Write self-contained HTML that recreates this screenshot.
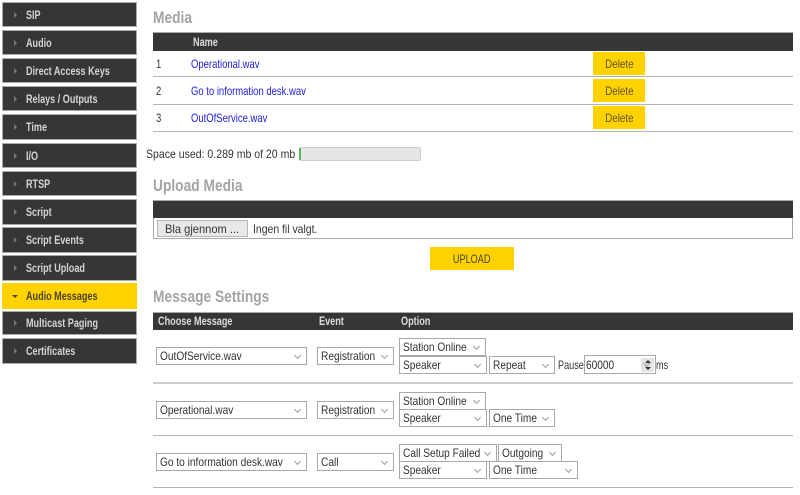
<!DOCTYPE html>
<html><head><meta charset="utf-8"><style>
html,body{margin:0;padding:0;width:800px;height:495px;overflow:hidden;background:#fff}
body{position:relative;font-family:"Liberation Sans",sans-serif;font-size:12px;color:#333;filter:blur(.3px)}
div{position:absolute;box-sizing:border-box}
span{position:absolute;white-space:nowrap;transform-origin:0 50%;transform:scaleX(.79);line-height:14px}
.n{left:2px;width:135px;background:#363636;border:1px solid #aaa}
.n span{left:23px;top:50%;margin-top:-7px;font-weight:bold;font-size:12px;color:#d4d4d4;transform:scaleX(.755)}
.n i{position:absolute;left:11px;top:50%;margin-top:-3px;border-left:3px solid #777;border-top:3px solid transparent;border-bottom:3px solid transparent}
.h{left:153px;font-size:17px;font-weight:bold;color:#a4a4a4;white-space:nowrap;transform-origin:0 50%;transform:scaleX(.81);line-height:18px}
.b{left:153px;width:640px;background:#363636;border-top:1px solid #aaa}
.b span{color:#ddd;font-weight:bold;font-size:12px;top:1px;transform:scaleX(.76)}
.l{left:153px;width:640px;height:1px;background:#b4b4b4}
.a{color:#2020e0}
.d{left:593px;width:52px;background:#ffd200;text-align:center;color:#5f5420;line-height:25px}
.d span{position:static;display:inline-block;transform-origin:50% 50%;transform:scaleX(.82);line-height:inherit}
.s{height:18px;background:#fff;border:1px solid #a8a8a8;color:#333}
.s span{left:3px;top:1px;font-size:12px;transform:scaleX(.845)}
.s:after{content:"";position:absolute;right:6px;top:5px;width:4px;height:4px;border-right:1px solid #999;border-bottom:1px solid #999;transform:rotate(45deg)}
</style></head><body>
<div class="n" style="top:2px;height:25px"><i></i><span>SIP</span></div>
<div class="n" style="top:30px;height:25px"><i></i><span>Audio</span></div>
<div class="n" style="top:58px;height:25px"><i></i><span>Direct Access Keys</span></div>
<div class="n" style="top:86px;height:25px"><i></i><span>Relays / Outputs</span></div>
<div class="n" style="top:114px;height:26px"><i></i><span>Time</span></div>
<div class="n" style="top:143px;height:25px"><i></i><span>I/O</span></div>
<div class="n" style="top:171px;height:25px"><i></i><span>RTSP</span></div>
<div class="n" style="top:199px;height:26px"><i></i><span>Script</span></div>
<div class="n" style="top:227px;height:26px"><i></i><span>Script Events</span></div>
<div class="n" style="top:255px;height:26px"><i></i><span>Script Upload</span></div>
<div class="n" style="top:283px;height:26px;background:#ffd200;border-color:#ffd200"><i style="left:9px;margin-top:-1px;border-left:3px solid transparent;border-right:3px solid transparent;border-top:3px solid #444;border-bottom:0"></i><span style="color:#4a4320">Audio Messages</span></div>
<div class="n" style="top:311px;height:24px"><i></i><span>Multicast Paging</span></div>
<div class="n" style="top:338px;height:26px"><i></i><span>Certificates</span></div>

<div class="h" style="top:9px">Media</div>
<div class="b" style="top:32px;height:19px"><span style="left:40px;top:2px">Name</span></div>
<span style="left:156px;top:57px">1</span><span class="a" style="left:191px;top:57px">Operational.wav</span>
<div class="l" style="top:76px"></div>
<span style="left:156px;top:84px">2</span><span class="a" style="left:191px;top:84px">Go to information desk.wav</span>
<div class="l" style="top:104px"></div>
<span style="left:156px;top:111px">3</span><span class="a" style="left:191px;top:111px">OutOfService.wav</span>
<div class="l" style="top:131px"></div>
<div class="d" style="top:52px;height:23px"><span>Delete</span></div>
<div class="d" style="top:79px;height:23px"><span>Delete</span></div>
<div class="d" style="top:106px;height:23px"><span>Delete</span></div>

<span style="left:146px;top:147px;transform:scaleX(.877)">Space used: 0.289 mb of 20 mb</span>
<div style="left:299px;top:147px;width:122px;height:14px;background:#e6e6e6;border:1px solid #ccc;border-radius:2px"></div>
<div style="left:299px;top:148px;width:2px;height:12px;background:#5cb85c"></div>

<div class="h" style="top:177px">Upload Media</div>
<div class="b" style="top:200px;height:18px"></div>
<div style="left:153px;top:218px;width:640px;height:21px;border:1px solid #aaa;border-top:0"></div>
<div style="left:157px;top:220px;width:91px;height:17px;background:#e8e8e8;border:1px solid #b8b8b8"><span style="left:7px;top:1px;transform:scaleX(.926)">Bla gjennom ...</span></div>
<span style="left:253px;top:222px;transform:scaleX(.87)">Ingen fil valgt.</span>
<div class="d" style="left:430px;top:247px;width:84px;height:23px;color:#4a4320"><span style="transform:scaleX(.76)">UPLOAD</span></div>

<div class="h" style="top:288px">Message Settings</div>
<div class="b" style="top:312px;height:18px"><span style="left:5px">Choose Message</span><span style="left:166px">Event</span><span style="left:248px">Option</span></div>

<div class="s" style="left:156px;top:347px;width:151px"><span>OutOfService.wav</span></div>
<div class="s" style="left:317px;top:347px;width:77px"><span>Registration</span></div>
<div class="s" style="left:399px;top:338px;width:87px"><span>Station Online</span></div>
<div class="s" style="left:399px;top:356px;width:88px"><span>Speaker</span></div>
<div class="s" style="left:489px;top:356px;width:66px"><span>Repeat</span></div>
<span style="left:558px;top:358px;transform:scaleX(.76)">Pause</span>
<div class="s" style="left:584px;top:355px;width:72px;height:19px"><span style="left:1px;top:2px">60000</span>
<div style="left:56px;top:2px;width:13px;height:14px;background:#e4e4e4"></div>
<div style="left:60px;top:4px;border-left:3px solid transparent;border-right:3px solid transparent;border-bottom:3px solid #333"></div>
<div style="left:60px;top:11px;border-left:3px solid transparent;border-right:3px solid transparent;border-top:3px solid #333"></div></div>
<span style="left:656px;top:358px;transform:scaleX(.76)">ms</span>
<div class="l" style="top:382px;height:2px;background:#ccc"></div>

<div class="s" style="left:156px;top:401px;width:151px"><span>Operational.wav</span></div>
<div class="s" style="left:317px;top:401px;width:77px"><span>Registration</span></div>
<div class="s" style="left:399px;top:392px;width:87px"><span>Station Online</span></div>
<div class="s" style="left:399px;top:409px;width:88px"><span>Speaker</span></div>
<div class="s" style="left:489px;top:409px;width:66px"><span>One Time</span></div>
<div class="l" style="top:435px"></div>

<div class="s" style="left:156px;top:453px;width:151px"><span>Go to information desk.wav</span></div>
<div class="s" style="left:317px;top:453px;width:77px"><span>Call</span></div>
<div class="s" style="left:399px;top:444px;width:98px"><span>Call Setup Failed</span></div>
<div class="s" style="left:498px;top:444px;width:64px"><span>Outgoing</span></div>
<div class="s" style="left:399px;top:461px;width:88px"><span>Speaker</span></div>
<div class="s" style="left:489px;top:461px;width:89px"><span>One Time</span></div>
<div class="l" style="top:487px"></div>
</body></html>
